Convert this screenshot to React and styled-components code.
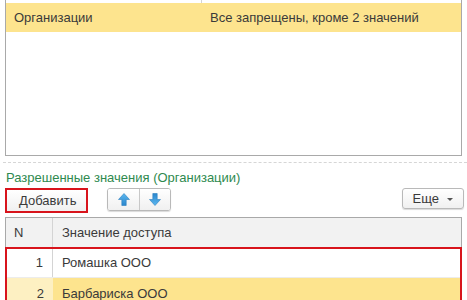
import React from "react";
import styled, { createGlobalStyle } from "styled-components";

const Global = createGlobalStyle`
  html, body { margin: 0; padding: 0; background: #fff; }
  body { font-family: Arial, "Liberation Sans", sans-serif; }
`;

const Page = styled.div`
  width: 467px;
  height: 300px;
  overflow: hidden;
  background: #fff;
  color: #3a3a3a;
  font-size: 13px;
  display: flex;
  flex-direction: column;
`;

const TopTable = styled.div`
  margin: 0 5px 0 5px;
  height: 156px;
  flex: none;
  box-sizing: border-box;
  border: 1px solid #a9a9a9;
  border-top: none;
  display: flex;
  flex-direction: column;
`;

const Row = styled.div`
  display: flex;
  height: ${(p) => p.$h}px;
  flex: none;
  background: ${(p) => p.$bg || "transparent"};
  box-sizing: border-box;
`;

const Cell = styled.div`
  width: ${(p) => (p.$w ? p.$w + "px" : "auto")};
  flex: ${(p) => (p.$w ? "none" : "1")};
  box-sizing: border-box;
  display: flex;
  align-items: center;
  justify-content: ${(p) => (p.$right ? "flex-end" : "flex-start")};
  padding: ${(p) => p.$pad || "0 0 0 8px"};
  border-right: ${(p) => (p.$div ? "1px solid #d4d4d4" : "none")};
  background: ${(p) => p.$bg || "transparent"};
  white-space: nowrap;
`;

const Separator = styled.div`
  margin: 6px 0 0 3px;
  border-top: 1px dashed #d6d6d6;
  height: 0;
  flex: none;
`;

const GroupTitle = styled.div`
  color: #2f8a4f;
  padding: 6px 0 0 6px;
  height: 18px;
  line-height: 18px;
  flex: none;
`;

const Toolbar = styled.div`
  display: flex;
  align-items: flex-start;
  padding: 1px 3px 0 5px;
  height: 30px;
  flex: none;
  box-sizing: border-box;
`;

const Highlight = styled.div`
  border: 2px solid #d8141c;
  display: flex;
  width: 83px;
  height: 25px;
  box-sizing: border-box;
`;

const Button = styled.button`
  font: inherit;
  color: #3a3a3a;
  background: linear-gradient(#ffffff, #f0f0f0);
  border: ${(p) => (p.$plain ? "none" : "1px solid #b9b9b9")};
  border-radius: ${(p) => (p.$plain ? "0" : "3px")};
  box-shadow: ${(p) => (p.$plain ? "none" : "0 1px 1px rgba(0,0,0,0.15)")};
  padding: 0 ${(p) => p.$px || 10}px;
  height: ${(p) => p.$h || 21}px;
  min-width: ${(p) => p.$minw || 0}px;
  display: flex;
  align-items: center;
  gap: 8px;
  cursor: pointer;
  flex: ${(p) => (p.$fill ? "1" : "none")};
  justify-content: ${(p) => (p.$fill ? "flex-start" : "flex-end")};
`;

const ButtonGroup = styled.div`
  display: flex;
  margin-left: 19px;
  height: 21px;
  border: 1px solid #b9b9b9;
  border-radius: 3px;
  box-shadow: 0 1px 1px rgba(0,0,0,0.15);
  overflow: hidden;
`;

const GroupButton = styled.button`
  width: 31px;
  height: 100%;
  border: none;
  border-left: ${(p) => (p.$first ? "none" : "1px solid #c8c8c8")};
  background: linear-gradient(#ffffff, #f0f0f0);
  display: flex;
  align-items: center;
  justify-content: center;
  padding: 0;
`;

const Spacer = styled.div`
  flex: 1;
`;

const BottomTable = styled.div`
  margin: 0 5px;
  border: 1px solid #a9a9a9;
  border-bottom: none;
  flex: 1;
  display: flex;
  flex-direction: column;
  position: relative;
`;

const HeaderRow = styled(Row)`
  background: #f2f2f2;
  border-bottom: 1px solid #d9d9d9;
`;

const SelectionFrame = styled.div`
  position: absolute;
  left: -1px;
  right: -1px;
  top: 29px;
  bottom: -4px;
  border: 2px solid #d8141c;
  pointer-events: none;
`;

const DataRow = styled(Row)`
  border-bottom: 1px solid #ececec;
`;

const Caret = styled.span`
  width: 0;
  height: 0;
  border-left: 3px solid transparent;
  border-right: 3px solid transparent;
  border-top: 3px solid #555;
  margin-top: 1px;
`;

const Arrow = ({ down }) => (
  <svg width="12" height="13" viewBox="0 0 12 13" style={{ transform: down ? "rotate(180deg)" : "none" }}>
    <defs>
      <linearGradient id={down ? "gd" : "gu"} x1="0" y1="0" x2="0" y2="1">
        <stop offset="0" stopColor="#5cb8f0" />
        <stop offset="1" stopColor="#2a86cc" />
      </linearGradient>
    </defs>
    <path d="M6 0.5 L11.5 6.5 L8.2 6.5 L8.2 12.5 L3.8 12.5 L3.8 6.5 L0.5 6.5 Z" fill={`url(#${down ? "gd" : "gu"})`} stroke="#2c7fc0" strokeWidth="0.6" />
  </svg>
);

export default function App() {
  return (
    <Page>
      <Global />
      <TopTable>
        <Row $h={3}>
          <Cell $w={196} $div />
          <Cell />
        </Row>
        <Row $h={29} $bg="#fde48e">
          <Cell $w={196}>Организации</Cell>
          <Cell $pad="0 0 0 8px">Все запрещены, кроме 2 значений</Cell>
        </Row>
      </TopTable>
      <Separator />
      <GroupTitle>Разрешенные значения (Организации)</GroupTitle>
      <Toolbar>
        <Highlight>
          <Button $plain $fill $h={21} $px={12}>Добавить</Button>
        </Highlight>
        <ButtonGroup>
          <GroupButton $first><Arrow /></GroupButton>
          <GroupButton><Arrow down /></GroupButton>
        </ButtonGroup>
        <Spacer />
        <Button $px={10} $minw={62}>Еще <Caret /></Button>
      </Toolbar>
      <BottomTable>
        <HeaderRow $h={30}>
          <Cell $w={47} $div>N</Cell>
          <Cell $pad="0 0 0 9px">Значение доступа</Cell>
        </HeaderRow>
        <DataRow $h={30}>
          <Cell $w={47} $right $pad="0 9px 0 0" $div>1</Cell>
          <Cell $pad="0 0 0 9px">Ромашка ООО</Cell>
        </DataRow>
        <Row $h={30}>
          <Cell $w={47} $right $pad="0 9px 0 0" $bg="#fdf0c2">2</Cell>
          <Cell $pad="0 0 0 9px" $bg="#fde48e">Барбариска ООО</Cell>
        </Row>
        <SelectionFrame />
      </BottomTable>
    </Page>
  );
}
